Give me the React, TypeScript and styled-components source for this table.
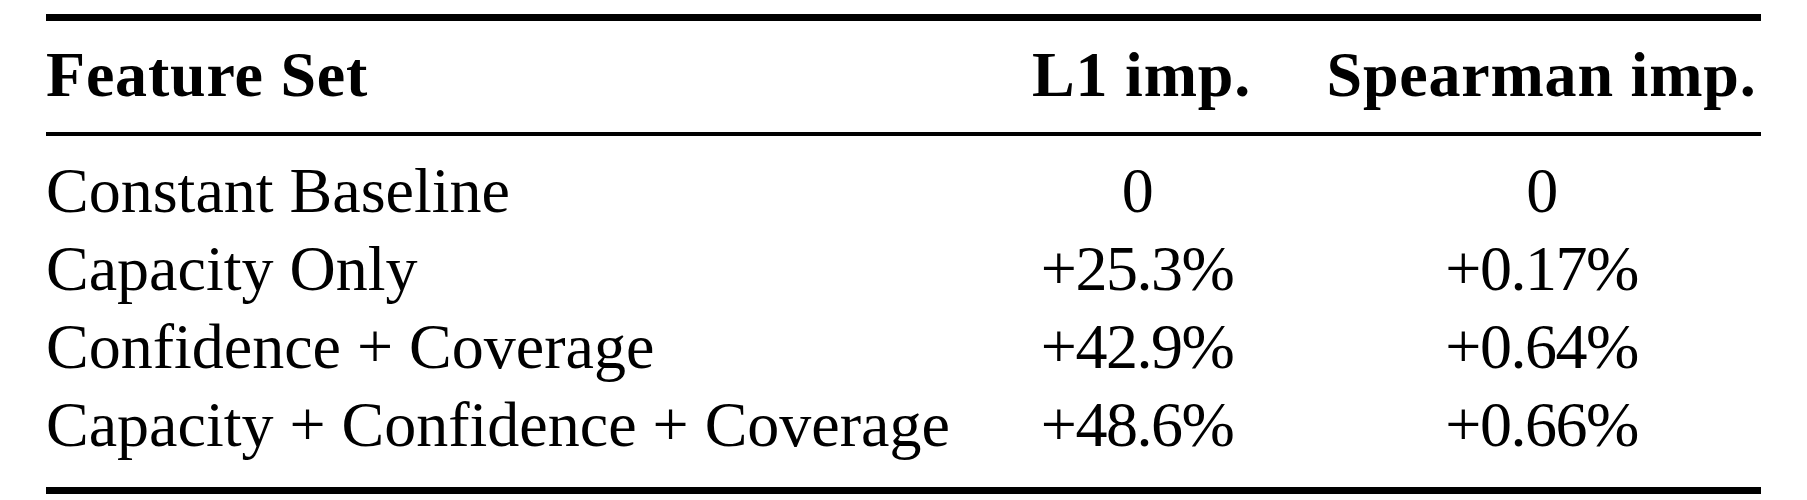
import React from "react";
import styled, { createGlobalStyle } from "styled-components";

const GlobalStyle = createGlobalStyle`
  html, body {
    margin: 0;
    padding: 0;
    background: #ffffff;
  }
  body {
    font-family: "Liberation Serif", "Times New Roman", serif;
    color: #000000;
  }
`;

const Table = styled.div`
  margin: 14px 0 0 46px;
  width: 1715px;
  border-top: 7px solid #000;
  border-bottom: 7px solid #000;
  font-family: "Liberation Serif", "Times New Roman", serif;
  font-size: 64px;
  line-height: 78px;
  color: #000;
`;

const Grid = styled.div`
  display: grid;
  grid-template-columns: minmax(0, 1fr) 210px 433px;
  column-gap: 83px;
  padding-right: 3px;
`;

const HeaderRow = styled(Grid)`
  padding-top: 15px;
  padding-bottom: 18px;
  border-bottom: 4px solid #000;
  font-weight: 700;
`;

const Body = styled.div`
  padding-top: 16px;
  padding-bottom: 23px;
`;

const Row = styled(Grid)`
  height: 78px;
`;

const Cell = styled.div<{ $center?: boolean }>`
  text-align: ${(p) => (p.$center ? "center" : "left")};
  white-space: nowrap;
  letter-spacing: ${(p) => (p.$center ? "-1.5px" : "0")};
`;

const HeadCell = styled(Cell)`
  letter-spacing: 0.8px;
`;

const rows = [
  { name: "Constant Baseline", l1: "0", sp: "0" },
  { name: "Capacity Only", l1: "+25.3%", sp: "+0.17%" },
  { name: "Confidence + Coverage", l1: "+42.9%", sp: "+0.64%" },
  { name: "Capacity + Confidence + Coverage", l1: "+48.6%", sp: "+0.66%" },
];

export default function App() {
  return (
    <>
      <GlobalStyle />
      <Table>
        <HeaderRow>
          <HeadCell>Feature Set</HeadCell>
          <HeadCell $center>L1 imp.</HeadCell>
          <HeadCell $center>Spearman imp.</HeadCell>
        </HeaderRow>
        <Body>
          {rows.map((r) => (
            <Row key={r.name}>
              <Cell>{r.name}</Cell>
              <Cell $center>{r.l1}</Cell>
              <Cell $center>{r.sp}</Cell>
            </Row>
          ))}
        </Body>
      </Table>
    </>
  );
}
